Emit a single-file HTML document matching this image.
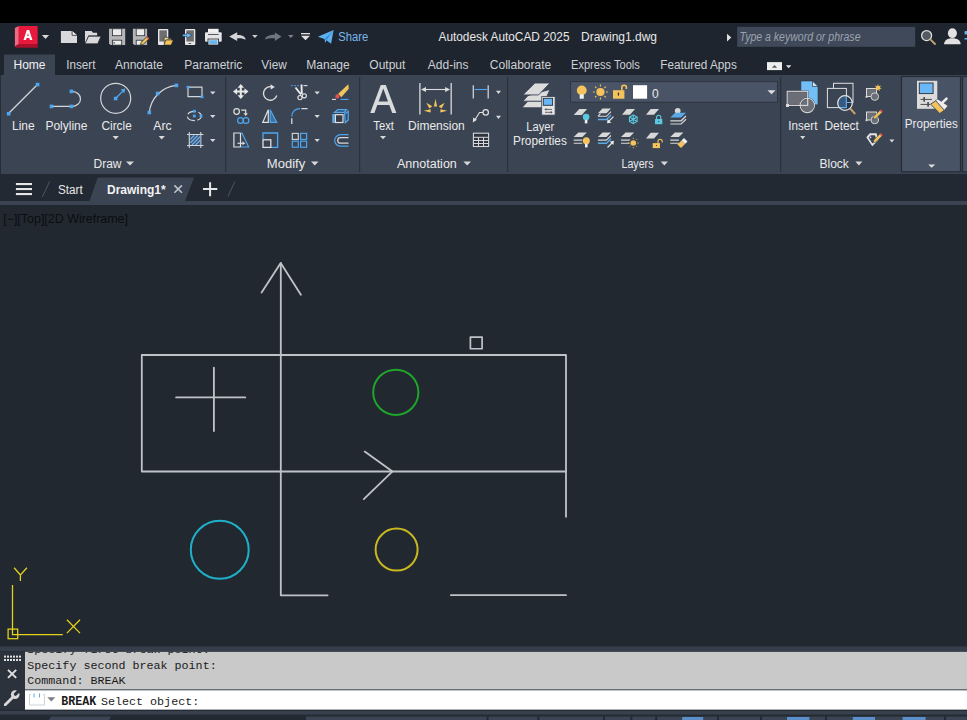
<!DOCTYPE html>
<html><head><meta charset="utf-8">
<style>
html,body{margin:0;padding:0;width:967px;height:720px;overflow:hidden;background:#212830;}
svg{display:block;position:absolute;left:0;top:0;}
text{font-family:"Liberation Sans",sans-serif;}
.m text,text.m{font-family:"Liberation Mono",monospace;}
</style></head><body>
<svg width="967" height="720" viewBox="0 0 967 720">
<!-- top black bar -->
<rect x="0" y="0" width="967" height="23" fill="#000"/>
<!-- title bar + tab row -->
<rect x="0" y="23" width="967" height="52" fill="#1f252e"/>
<!-- active Home tab -->
<rect x="4" y="54.5" width="51" height="21" fill="#3b4453"/>
<!-- ribbon -->
<rect x="0" y="75" width="967" height="99" fill="#3b4453"/>
<rect x="0" y="75" width="1" height="99" fill="#272d37"/>
<!-- file tab bar -->
<rect x="0" y="174" width="967" height="27" fill="#222933"/>
<rect x="0" y="201" width="967" height="4" fill="#3b4453"/>
<!-- canvas -->
<rect x="0" y="205" width="967" height="442" fill="#212830"/>
<!-- command line -->
<rect x="0" y="646.5" width="967" height="4.5" fill="#363e4b"/>
<rect x="0" y="651.5" width="967" height="68.5" fill="#2b323c"/>
<rect x="25" y="651.8" width="942" height="37.6" fill="#c9c9c9"/>
<rect x="25" y="690.3" width="942" height="19.5" fill="#ffffff"/>
<!-- status bar stub -->
<rect x="0" y="709.8" width="967" height="10.2" fill="#232a33"/>
<rect x="0" y="711" width="967" height="3.5" fill="#38404d"/>
<rect x="0" y="716.5" width="967" height="3.5" fill="#222933"/>
<polygon points="51,716.5 111,716.5 109,720 49,720" fill="#3b4453"/>
<rect x="306" y="716.5" width="661" height="3.5" fill="#3b4453"/>
<g fill="#222933">
<rect x="486.5" y="716.5" width="2" height="3.5"/><rect x="537.3" y="716.5" width="2" height="3.5"/><rect x="603" y="716.5" width="2" height="3.5"/><rect x="630.4" y="716.5" width="2" height="3.5"/><rect x="655.2" y="716.5" width="2" height="3.5"/><rect x="717" y="716.5" width="2" height="3.5"/><rect x="760" y="716.5" width="2" height="3.5"/><rect x="825" y="716.5" width="2" height="3.5"/><rect x="944" y="716.5" width="2" height="3.5"/>
</g>
<g fill="#5b8fc9">
<rect x="682.2" y="717" width="21" height="3"/><rect x="787" y="717" width="22.4" height="3"/><rect x="852.8" y="717" width="22.2" height="3"/><rect x="902.6" y="717" width="23" height="3"/>
</g>



<!-- ===== QAT ICONS ===== -->
<g id="qat">
<!-- logo -->
<polygon points="14.9,28 18.8,26 18.8,44 14.9,46.4" fill="#f26a82"/>
<polygon points="14.9,46.4 18.8,44 37.6,44 37.8,47.8 16,47.8" fill="#a8102c"/>
<rect x="18.8" y="26" width="18.8" height="18" fill="#e8193d"/>
<path d="M23.5,40 L26.8,29.9 L29.2,29.9 L32.4,40 L29.9,40 L29.3,38 L26.6,38 L26,40 Z M27.2,35.9 L28.7,35.9 L27.95,33 Z" fill="#fff"/>
<polygon points="41.9,35 49.1,35 45.5,39" fill="#d8d8d8"/>
<!-- new -->
<path d="M60.9,30.9 H72.1 L77,35.3 V43.1 H60.9 Z" fill="#d9d9db"/>
<path d="M72.1,30.9 L72.1,35.3 L77,35.3" fill="#f4f4f4" stroke="#1f252e" stroke-width="0.8"/>
<!-- open -->
<path d="M85,30.9 H91.5 L93,32.7 H97.1 V35.5 H88.4 L85,43.5 Z" fill="#d9d9db"/>
<path d="M88.6,36.2 H101 L97.7,43.8 H85 Z" fill="#d9d9db" stroke="#1f252e" stroke-width="0.7"/>
<!-- save -->
<path d="M109,28.8 H125.2 V45.1 H110.5 L109,43.6 Z" fill="#b5b5b7"/>
<rect x="112.4" y="28.8" width="9.3" height="6.9" fill="#ececec" stroke="#2a2f36" stroke-width="0.8"/>
<rect x="112.4" y="40.2" width="9.3" height="4.9" fill="#ececec" stroke="#2a2f36" stroke-width="0.8"/>
<rect x="113.6" y="42" width="1" height="1.7" fill="#333"/>
<!-- save as -->
<path d="M132.9,28.8 H147.1 V45.1 H134.4 L132.9,43.6 Z" fill="#b5b5b7"/>
<rect x="136.2" y="28.8" width="8.5" height="6.9" fill="#ececec" stroke="#2a2f36" stroke-width="0.8"/>
<rect x="136.2" y="40.2" width="6" height="4.9" fill="#ececec" stroke="#2a2f36" stroke-width="0.8"/>
<path d="M140.5,45.3 L141.2,42.3 L147.2,36.3 L149.3,38.4 L143.3,44.4 Z" fill="#f2c55c" stroke="#1f252e" stroke-width="0.8"/>
<path d="M146.1,37.4 L147.2,36.3 L149.3,38.4 L148.2,39.5 Z" fill="#e05050"/>
<!-- phone open -->
<rect x="158" y="29" width="10.3" height="16.1" rx="1" fill="#e6e6e6"/>
<rect x="159.4" y="30.3" width="7.5" height="11.2" fill="#6f6f70"/>
<path d="M164,37.2 H167.5 L168.5,38.6 H171.5 V40 H166 L164.5,45 Z" fill="#e8d08a" stroke="#1f252e" stroke-width="0.6"/>
<path d="M165.8,40 H173.2 L171.2,45.1 H164 Z" fill="#f4c45a" stroke="#1f252e" stroke-width="0.6"/>
<!-- phone save -->
<rect x="185" y="29" width="10.3" height="16.1" rx="1" fill="#e6e6e6"/>
<rect x="186.4" y="30.3" width="7.5" height="11.2" fill="#6f6f70"/>
<rect x="188.5" y="43" width="2.6" height="0.9" fill="#444"/>
<path d="M182.6,34.3 H187 V32.4 L191.8,35.4 L187,38.4 V36.5 H182.6 Z" fill="#69b9f5" stroke="#1f252e" stroke-width="0.5"/>
<!-- print -->
<rect x="208" y="28.8" width="10.6" height="5" fill="#f0f0f0"/>
<rect x="205" y="32.2" width="16.7" height="9.6" rx="1" fill="#e4e4e6"/>
<rect x="208" y="34" width="10.6" height="0.8" fill="#1f252e" opacity="0.9"/>
<rect x="208" y="39" width="10.6" height="6" fill="#eaeaea" stroke="#1f252e" stroke-width="0.8"/>
<rect x="209.2" y="40.2" width="8.2" height="3.8" fill="#6ab6f2"/>
<!-- undo -->
<path d="M229.2,36.5 L237.2,32.2 V34.9 C242,34.7 245.6,36.6 245.6,39.8 C244,38.4 241,38 237.2,38.2 V40.9 Z" fill="#d4d4d6"/>
<polygon points="252.1,35 257.7,35 254.9,38.1" fill="#cfcfcf"/>
<!-- redo -->
<path d="M281.5,36.4 L274.9,32.6 V34.8 C269.5,34.8 265,36.6 265,39.6 C267,38.4 270.5,38 274.9,38.2 V40.9 Z" fill="#6d7681"/>
<polygon points="288.1,35.1 293.5,35.1 290.8,38" fill="#7d8590"/>
<!-- customize -->
<rect x="301" y="33" width="9" height="1.3" fill="#e0e0e0"/>
<polygon points="301,35.8 310,35.8 305.5,40.2" fill="#e0e0e0"/>
<!-- share -->
<path d="M317.9,36.8 L333.6,30.1 L331.1,43.8 L326.4,40.2 L325.3,43 L324.5,38.9 Z" fill="#5db2f2"/>
<path d="M324.5,38.9 L333.6,30.1 L326.4,40.2 Z" fill="#3d8fd0"/>
<!-- minimize icon -->
<rect x="767" y="62.1" width="15" height="8" fill="#eeeeee"/>
<polygon points="772,67.8 777.1,67.8 774.55,64.9" fill="#555a60"/>
<polygon points="785.9,65.2 791.4,65.2 788.65,68.2" fill="#e0e0e0"/>
<!-- expander -->
<polygon points="727,33.8 731.3,37.6 727,41.4" fill="#e0e0e0"/>
<!-- search box -->
<rect x="737.2" y="26.8" width="178" height="20" fill="#3f4959"/>
<!-- search icon -->
<circle cx="926.6" cy="35.6" r="5" fill="#555b63" stroke="#dcdcdc" stroke-width="1.3"/>
<line x1="930.6" y1="39.6" x2="935" y2="44" stroke="#c4a675" stroke-width="1.8" stroke-linecap="round"/>
<!-- user -->
<ellipse cx="952.4" cy="33.2" rx="4.5" ry="4.9" fill="#e2e2e2"/>
<path d="M944,44.2 C944.3,40.4 947.5,38.3 952.4,38.3 C957.3,38.3 960.5,40.4 960.7,44.2 Z" fill="#e2e2e2"/>
<rect x="964.5" y="31" width="3" height="3.5" fill="#5db2f2" rx="1"/>
<rect x="964.5" y="38" width="3" height="1.5" fill="#5db2f2"/>
</g>

<!-- ===== RIBBON: DRAW ===== -->
<g id="draw">
<g fill="#d8d8d8">
<polygon points="112.6,136 118.8,136 115.7,139.5"/>
<polygon points="158.6,136 164.8,136 161.7,139.5"/>
<polygon points="210,91.5 215.5,91.5 212.75,94.5"/>
<polygon points="210,115 215.5,115 212.75,118"/>
<polygon points="210,139 215.5,139 212.75,142"/>
<polygon points="126,161.5 134,161.5 130,165.5"/>
</g>
<line x1="9" y1="113" x2="37" y2="85" stroke="#d4d6d8" stroke-width="1.2"/>
<path d="M51.5,106.4 H71.4 M71.4,91.4 C83.5,91.4 83.5,106.4 71.4,106.4" fill="none" stroke="#d4d6d8" stroke-width="1.2"/>
<circle cx="115.7" cy="98.3" r="15" fill="none" stroke="#d4d6d8" stroke-width="1.2"/>
<line x1="116" y1="98" x2="124" y2="90" stroke="#4ea6f0" stroke-width="1.2"/>
<polygon points="125.3,88.6 120.6,89.6 124.3,93.3" fill="#4ea6f0"/>
<path d="M149.3,112.5 C150.5,99 161,87 176.4,85.4" fill="none" stroke="#d4d6d8" stroke-width="1.2"/>
<path d="M188,87.2 H202 V96.6 H188 Z" fill="none" stroke="#d4d6d8" stroke-width="1.2"/>
<ellipse cx="194.3" cy="116" rx="7" ry="4.6" fill="none" stroke="#d4d6d8" stroke-width="1.1" stroke-dasharray="9 2.5" stroke-dashoffset="3"/>
<path d="M189.3,132 V148 M200.8,132 V148 M187,134.5 H203.5 M187,145.5 H203.5" stroke="#d4d6d8" stroke-width="1.1"/>
<rect x="190.3" y="135.3" width="9.9" height="9.6" fill="#3a5d86"/>
<path d="M190.4,139.3 L194.3,135.4 M190.4,142.8 L197.8,135.4 M192,144.8 L200.1,136.7 M195.6,144.8 L200.1,140.3" stroke="#7fb6e8" stroke-width="1.1"/>
<g fill="#4ea6f0">
<rect x="6.9" y="111.9" width="3.6" height="3.6"/>
<rect x="35.8" y="82.8" width="3.6" height="3.6"/>
<rect x="49.7" y="104.6" width="3.6" height="3.6"/>
<rect x="69.6" y="104.6" width="3.6" height="3.6"/>
<rect x="69.6" y="89.6" width="3.6" height="3.6"/>
<rect x="113.9" y="96.8" width="3.5" height="3.5"/>
<rect x="147.5" y="110.7" width="3.6" height="3.6"/>
<rect x="155.8" y="91.7" width="3.6" height="3.6"/>
<rect x="174.6" y="83.6" width="3.6" height="3.6"/>
<rect x="186.6" y="85.8" width="2.8" height="2.8"/>
<rect x="200.6" y="95.4" width="2.8" height="2.8"/>
<rect x="192.9" y="109.8" width="2.8" height="2.8"/>
<rect x="192.9" y="114.6" width="2.8" height="2.8"/>
<rect x="199.6" y="114.6" width="2.8" height="2.8"/>
</g>
<rect x="225" y="77" width="1.2" height="95" fill="#2b313b"/>
</g>
<!-- ===== RIBBON: MODIFY ===== -->
<g id="modify">
<g fill="#d8d8d8">
<polygon points="314.5,91.5 319.8,91.5 317.15,94.5"/>
<polygon points="314.5,115 319.8,115 317.15,118"/>
<polygon points="314.5,139 319.8,139 317.15,142"/>
<polygon points="311,161.5 318.5,161.5 314.75,165.5"/>
</g>
<!-- move -->
<path d="M240.8,84 L244,87.8 H241.8 V90.5 H244.5 V88.3 L248.5,91.5 L244.5,94.7 V92.5 H241.8 V95.2 H244 L240.8,99 L237.6,95.2 H239.8 V92.5 H237.1 V94.7 L233,91.5 L237.1,88.3 V90.5 H239.8 V87.8 H237.6 Z" fill="#e8e8e8"/>
<!-- rotate -->
<path d="M272.5,87 A6.8,6.8 0 1 0 276.8,95.5" fill="none" stroke="#e0e0e0" stroke-width="1.3"/>
<polygon points="270.5,84.2 274.8,87 270.8,89.6" fill="#e0e0e0"/>
<!-- copy -->
<circle cx="236.6" cy="111.5" r="2.8" fill="none" stroke="#e0e0e0" stroke-width="1.2"/>
<path d="M241.2,110.2 H245.7 V113.5" fill="none" stroke="#e0e0e0" stroke-width="1.2"/>
<polygon points="243.5,113.2 247.9,113.2 245.7,116" fill="#e0e0e0"/>
<circle cx="240.5" cy="120.5" r="2.9" fill="none" stroke="#4ea6f0" stroke-width="1.2"/>
<circle cx="246" cy="120.5" r="2.9" fill="none" stroke="#4ea6f0" stroke-width="1.2"/>
<!-- mirror -->
<path d="M262.8,122.3 L268.3,109.8 V122.3 Z" fill="none" stroke="#e0e0e0" stroke-width="1.2"/>
<path d="M270.2,109.8 L276.7,122.3 H270.2 Z" fill="#4ea6f0" fill-opacity="0.45" stroke="#4ea6f0" stroke-width="1.2"/>
<!-- stretch -->
<path d="M240.5,147 H233.9 V133 H240.5" fill="none" stroke="#e0e0e0" stroke-width="1.2"/>
<path d="M240.5,133 H242 L248.6,147 H240.5" fill="none" stroke="#4ea6f0" stroke-width="1.2"/>
<path d="M240.5,133 V147" stroke="#e0e0e0" stroke-width="1.2"/>
<path d="M237.5,143.3 H243" stroke="#e0e0e0" stroke-width="1.1"/>
<polygon points="242.5,141.3 245.2,143.3 242.5,145.3" fill="#e0e0e0"/>
<!-- scale -->
<path d="M263,139 V133 H277.6 V147.4 H271" fill="none" stroke="#4ea6f0" stroke-width="1.3"/>
<rect x="263" y="139.8" width="7.8" height="7.6" fill="none" stroke="#e0e0e0" stroke-width="1.3"/>
<!-- trim -->
<path d="M291,85.6 H300" stroke="#4a85c0" stroke-width="1.1" stroke-dasharray="2 1"/>
<path d="M303.5,85.6 H307.5" stroke="#e0e0e0" stroke-width="1.1"/>
<path d="M295.5,87.5 L301,94.5 M301.5,84.5 L301.8,94" stroke="#ececec" stroke-width="1.9"/>
<circle cx="300" cy="97.6" r="2.1" fill="none" stroke="#e8e8e8" stroke-width="1.1"/>
<circle cx="304.3" cy="95.8" r="2.1" fill="none" stroke="#e8e8e8" stroke-width="1.1"/>
<!-- erase -->
<path d="M338.2,93.8 L348.3,84.2 L348.8,88.8 L341.3,97.2 Z" fill="#f2c55c"/>
<circle cx="337.4" cy="96.4" r="2.1" fill="#e35050"/>
<path d="M332,99.4 H336" stroke="#e0e0e0" stroke-width="1.1"/>
<path d="M340.5,99.4 H348.5" stroke="#4ea6f0" stroke-width="1.1"/>
<!-- fillet -->
<path d="M291.8,116.5 C291.8,112 295,108.6 300,108.6" fill="none" stroke="#4ea6f0" stroke-width="1.3"/>
<path d="M301.3,108.6 H307.6 M291.8,118.2 V124" stroke="#d8d8d8" stroke-width="1.3"/>
<!-- explode cube -->
<path d="M334.5,112.4 L337.8,109.6 H346.5 L344.2,112.4 Z" fill="#24507e" stroke="#5aa9e6" stroke-width="1.2"/>
<path d="M344.6,114 L348.2,111.2 V120 L345.3,122.8 Z" fill="#24507e" stroke="#5aa9e6" stroke-width="1.2"/>
<rect x="332.2" y="114" width="2.6" height="9" fill="#5aa9e6"/>
<rect x="335.4" y="114.7" width="7.6" height="7.8" fill="#363d48" stroke="#e0e0e0" stroke-width="1.2"/>
<!-- array -->
<rect x="292.3" y="133.4" width="6" height="6" fill="none" stroke="#cfcfcf" stroke-width="1.2"/>
<rect x="300.6" y="133.4" width="6" height="6" fill="none" stroke="#4ea6f0" stroke-width="1.2"/>
<rect x="292.3" y="141.2" width="6" height="6" fill="none" stroke="#4ea6f0" stroke-width="1.2"/>
<rect x="300.6" y="141.2" width="6" height="6" fill="none" stroke="#4ea6f0" stroke-width="1.2"/>
<!-- offset -->
<path d="M348.5,134.6 H340.5 A5.8,5.8 0 0 0 340.5,146.2 H348.5" fill="none" stroke="#4ea6f0" stroke-width="1.2"/>
<path d="M348.5,137.6 H340.5 A2.8,2.8 0 0 0 340.5,143.2 H348.5" fill="none" stroke="#d8d8d8" stroke-width="1.2"/>
<rect x="359" y="77" width="1.2" height="95" fill="#2b313b"/>
</g>

<!-- ===== RIBBON: ANNOTATION ===== -->
<g id="annot">
<g fill="#d8d8d8">
<polygon points="380,136 386,136 383,139.3"/>
<polygon points="496,90.8 501,90.8 498.5,94"/>
<polygon points="496,115.8 501,115.8 498.5,119"/>
<polygon points="463.4,161.5 471,161.5 467.2,165.5"/>
</g>
<!-- big A -->
<path d="M370.2,113 L380.8,85 H385.8 L396.4,113 H392.2 L389.3,105 H377.3 L374.4,113 Z M378.6,101.4 H388 L383.3,88.6 Z" fill="#d9dadc"/>
<!-- dimension -->
<path d="M419.9,83.1 V114.5 M451.2,83.1 V114.5" stroke="#cfd0d2" stroke-width="1.4"/>
<path d="M423,89.5 H448" stroke="#dcdcdc" stroke-width="1.1"/>
<polygon points="421,89.5 426,87 426,92" fill="#dcdcdc"/>
<polygon points="450.1,89.5 445.1,87 445.1,92" fill="#dcdcdc"/>
<g fill="#f2c55c">
<polygon points="433.9,106.6 435.5,98.8 437.1,106.6"/>
<polygon points="429.4,108.6 426.3,102.8 432.3,106.3"/>
<polygon points="441.6,108.6 444.7,102.8 438.7,106.3"/>
<polygon points="430.6,109.2 423.8,110.8 430.6,112.4"/>
<polygon points="440.4,109.2 447.2,110.8 440.4,112.4"/>
</g>
<!-- linear dim -->
<path d="M473.3,85.2 V98.6 M488.2,85.2 V98.6" stroke="#cfd0d2" stroke-width="1.3"/>
<path d="M474.5,89.5 H487" stroke="#4ea6f0" stroke-width="1.1"/>
<!-- leader -->
<circle cx="485.7" cy="112.4" r="2.7" fill="none" stroke="#e0e0e0" stroke-width="1.2"/>
<path d="M483,112.5 H479.5 L474.5,120.5" fill="none" stroke="#e0e0e0" stroke-width="1.1"/>
<polygon points="472.8,122.5 473.2,117.6 477,119.8" fill="#e0e0e0"/>
<!-- table -->
<rect x="473.4" y="133.2" width="15.2" height="13.3" fill="#2f3540" stroke="#d8d8d8" stroke-width="1.1"/>
<path d="M473.4,137.3 H488.6 M473.4,140.5 H488.6 M473.4,143.5 H488.6 M478.5,137.3 V146.5 M483.5,137.3 V146.5" stroke="#d8d8d8" stroke-width="1"/>
<rect x="507" y="77" width="1.2" height="95" fill="#2b313b"/>
</g>
<!-- ===== RIBBON: LAYERS ===== -->
<g id="layers">
<polygon points="660.7,161.5 668,161.5 664.35,165.5" fill="#d8d8d8"/>
<!-- layer properties big -->
<polygon points="522.8,107.2 528,101.6 550,101.6 544.8,107.2" fill="#dcdcdc"/>
<polygon points="522.8,101.2 528,95.6 550,89.4 544.8,101.2" fill="#dcdcdc" stroke="#3b4453" stroke-width="0.9"/>
<polygon points="522.8,94.9 534.9,83 550,83 538.6,94.9" fill="#dcdcdc" stroke="#3b4453" stroke-width="0.9"/>
<rect x="541.7" y="96.6" width="13.4" height="18.5" fill="#e6e6e6" stroke="#3b4453" stroke-width="0.8"/>
<rect x="543.3" y="98.3" width="9.3" height="7" fill="#68b6f6" stroke="#2a2f36" stroke-width="0.9"/>
<path d="M545,109.4 H552 M545,112.3 H552" stroke="#555" stroke-width="0.9"/>
<polygon points="544.4,109.4 546.4,108 546.4,110.8" fill="#555"/>
<polygon points="552.7,112.3 550.7,110.9 550.7,113.7" fill="#555"/>
<!-- combobox -->
<rect x="570.6" y="81.6" width="207" height="20.6" fill="#4a5467" stroke="#2e3541" stroke-width="1"/>
<polygon points="767.5,90.3 775.5,90.3 771.5,94.3" fill="#e0e0e0"/>
<circle cx="581.75" cy="90.4" r="4.9" fill="#f5c35c"/>
<rect x="579.7" y="94.4" width="4.1" height="4.3" fill="#f0f0f0"/>
<circle cx="600.4" cy="92" r="4.1" fill="#f5c35c"/>
<path d="M600.4,84.5 V86.4 M600.4,97.6 V99.5 M592.9,92 H594.8 M606,92 H607.9 M595.1,86.7 L596.4,88 M604.4,96 L605.7,97.3 M605.7,86.7 L604.4,88 M596.4,96 L595.1,97.3" stroke="#f5c35c" stroke-width="1.1"/>
<path d="M621.8,90.3 V87.5 A2.3,2.3 0 0 1 626.4,87.5 V89" fill="none" stroke="#f5c35c" stroke-width="1.6"/>
<rect x="613" y="90.2" width="11.4" height="8.5" fill="#f5c35c"/>
<rect x="617.8" y="92.6" width="1.3" height="3" fill="#333"/>
<rect x="633" y="85.2" width="14.1" height="13.5" fill="#ffffff"/>
<!-- small layer icons -->
<g fill="#d8d8d8">
<polygon points="573.7,114.9 579.3,109 587.1,109 581.8,114.9"/>
<polygon points="622,114.7 626.7,109 635,109 630,114.7"/>
<polygon points="646,114.7 650.7,109 659,109 654,114.7"/>
<polygon points="646,138.5 650.7,132.8 659,132.8 654,138.5"/>
</g>
<circle cx="586.1" cy="117" r="3.3" fill="#5cc8e0"/>
<rect x="584.8" y="119.8" width="2.6" height="3.6" fill="#f0f0f0"/>
<g stroke="#5cc8e0" stroke-width="1.1" fill="none">
<polygon points="633.3,114.9 637.1,117.1 637.1,121.5 633.3,123.7 629.5,121.5 629.5,117.1"/>
<path d="M633.3,114.9 V123.7 M629.5,117.1 L637.1,121.5 M629.5,121.5 L637.1,117.1"/>
</g>
<path d="M656.6,119 V117.4 A2.1,2.1 0 0 1 660.8,117.4 V119" fill="none" stroke="#5cc8e0" stroke-width="1.1"/>
<rect x="655" y="119" width="7.3" height="5.2" fill="#5cc8e0"/>
<rect x="658.2" y="121" width="0.9" height="1" fill="#333"/>
<!-- stacks -->
<g id="stk">
<polygon points="597.9,113.2 602.5,108.6 611,108.6 606.5,113.2" fill="#d8d8d8"/>
<path d="M597.9,116.3 L600.5,113.6 M597.9,116.3 H606.5 L611,111.7" fill="none" stroke="#d8d8d8" stroke-width="1.1"/>
<path d="M597.9,119.5 H606.5 L611,114.9" fill="none" stroke="#5aa9e6" stroke-width="1.4"/>
</g>
<path d="M613.5,116.6 L608.5,121.6" stroke="#e8e8e8" stroke-width="1.2"/>
<polygon points="607,123.3 607.6,119 611.3,122.7" fill="#e8e8e8"/>
<!-- stack row2 2 -->
<polygon points="597.9,137 602.5,132.4 611,132.4 606.5,137" fill="#d8d8d8"/>
<path d="M597.9,140.1 H606.5 L611,135.5" fill="none" stroke="#d8d8d8" stroke-width="1.1"/>
<path d="M597.9,143.3 H606.5 L611,138.7" fill="none" stroke="#5aa9e6" stroke-width="1.4"/>
<path d="M607.5,147.5 L612.5,142.5" stroke="#e8e8e8" stroke-width="1.2"/>
<polygon points="614,140.8 613.4,145.1 609.7,141.4" fill="#e8e8e8"/>
<!-- stack + bulb -->
<polygon points="573.7,137 578.3,132.4 586.8,132.4 582.3,137" fill="#d8d8d8"/>
<path d="M573.7,140.1 H582.3 M573.7,143.3 H582.3" stroke="#d8d8d8" stroke-width="1.1"/>
<circle cx="586.3" cy="140.8" r="3.5" fill="#f5c35c"/>
<rect x="585" y="143.8" width="2.6" height="3.6" fill="#f0f0f0"/>
<!-- stack + sun -->
<polygon points="621,137 625.6,132.4 634.1,132.4 629.6,137" fill="#d8d8d8"/>
<path d="M621,140.1 H629.6 M621,143.3 H629.6" stroke="#d8d8d8" stroke-width="1.1"/>
<circle cx="633.3" cy="143" r="2.8" fill="#f5c35c"/>
<path d="M633.3,137.8 V138.8 M633.3,147.2 V148.2 M628.1,143 H629.1 M637.5,143 H638.5 M629.6,139.3 L630.3,140 M636.3,146 L637,146.7 M637,139.3 L636.3,140 M630.3,146 L629.6,146.7" stroke="#f5c35c" stroke-width="1"/>
<!-- unlocked -->
<path d="M658,143.3 V141.3 A2.1,2.1 0 0 1 662.2,141.3 V142.5" fill="none" stroke="#f5c35c" stroke-width="1.1"/>
<rect x="652.7" y="143.1" width="7.3" height="5" fill="#f5c35c"/>
<rect x="656" y="145" width="0.9" height="1" fill="#333"/>
<!-- stack blue top + circle -->
<circle cx="677.7" cy="110.8" r="2.9" fill="#d8d8d8"/>
<polygon points="670.3,117.6 675.2,112.8 686,112.8 681.1,117.6" fill="#5aa9e6"/>
<path d="M670.3,120.8 H681.1 L686,116 M670.3,124 H681.1 L686,119.2" fill="none" stroke="#d8d8d8" stroke-width="1.2"/>
<!-- stack + brush -->
<polygon points="670.3,137 674.9,132.4 683.4,132.4 678.9,137" fill="#d8d8d8"/>
<path d="M670.3,140.1 H678.9 M670.3,143.3 H678.9" stroke="#d8d8d8" stroke-width="1.1"/>
<path d="M677.5,144.5 L681.5,140.5 L685,144 L681,148 Z" fill="#f5c35c"/>
<path d="M681.5,140.5 L684,138 L687.5,141.5 L685,144 Z" fill="#eeeeee"/>
<rect x="780" y="77" width="1.2" height="95" fill="#2b313b"/>
</g>
<!-- ===== RIBBON: BLOCK ===== -->
<g id="block">
<g fill="#d8d8d8">
<polygon points="800.2,136 805.2,136 802.7,139.2"/>
<polygon points="889.4,139.6 894.3,139.6 891.85,142.6"/>
<polygon points="855.4,161.5 862.4,161.5 858.9,165.5"/>
</g>
<!-- insert -->
<path d="M800.9,81 H812.5 L818,86.5 V104.8 H800.9 Z" fill="#74bef7" stroke="#2e3541" stroke-width="0.6"/>
<path d="M812.5,81 V86.5 H818 Z" fill="#cfe8fc" stroke="#2e3541" stroke-width="0.7"/>
<rect x="787.2" y="91.3" width="20.5" height="14.1" fill="#6b6e76" stroke="#2e3541" stroke-width="1.6"/>
<circle cx="807.3" cy="105.4" r="7.2" fill="#6b6e76" stroke="#2e3541" stroke-width="1.6"/>
<circle cx="807.3" cy="105.4" r="7.2" fill="none" stroke="#d4d4d4" stroke-width="1.1"/>
<rect x="787.2" y="91.3" width="20.5" height="14.1" fill="none" stroke="#dcdcdc" stroke-width="1.1"/>
<rect x="786" y="104" width="3" height="3" fill="#dcdcdc"/>
<!-- detect -->
<rect x="833.5" y="83.3" width="19.5" height="19" fill="none" stroke="#e0e0e0" stroke-width="1"/>
<rect x="827.4" y="88.4" width="19" height="19.2" fill="#3b4453" stroke="#e0e0e0" stroke-width="1"/>
<line x1="850" y1="108.4" x2="855.2" y2="114" stroke="#c9a46a" stroke-width="2"/>
<clipPath id="magc"><circle cx="845" cy="103" r="7"/></clipPath>
<circle cx="845" cy="103" r="7.3" fill="#2c3542"/>
<g clip-path="url(#magc)">
<rect x="836" y="94" width="10.4" height="13.6" fill="#35597f"/>
<path d="M846.3,94 V107.6 H836 M846.3,102.5 H853" fill="none" stroke="#6ab0ee" stroke-width="1.1"/>
</g>
<circle cx="845" cy="103" r="7.3" fill="none" stroke="#e2e2e2" stroke-width="1.3"/>
<!-- small block icons -->
<rect x="866.5" y="88.5" width="10" height="8" fill="#6b6f77" stroke="#dcdcdc" stroke-width="1"/>
<circle cx="874.8" cy="96.6" r="3.8" fill="#6b6f77" stroke="#cfcfcf" stroke-width="1"/>
<rect x="865.6" y="96" width="1.8" height="1.8" fill="#dcdcdc"/>
<path d="M878,84 L878.8,86.2 L881,85.4 L879.8,87.5 L881.8,88.6 L879.4,88.9 L879.8,91.2 L878,89.6 L876.2,91.2 L876.6,88.9 L874.2,88.6 L876.2,87.5 L875,85.4 L877.2,86.2 Z" fill="#f5c35c"/>
<rect x="866.5" y="112" width="10" height="8" fill="#6b6f77" stroke="#dcdcdc" stroke-width="1"/>
<circle cx="874.8" cy="120" r="3.8" fill="#6b6f77" stroke="#cfcfcf" stroke-width="1"/>
<rect x="865.6" y="119.4" width="1.8" height="1.8" fill="#dcdcdc"/>
<path d="M873.8,116.5 L880.2,110.1 L882.3,112.2 L875.9,118.6 L873.2,119.2 Z" fill="#f5c35c" stroke="#3b4453" stroke-width="0.6"/>
<path d="M879.6,110.7 L880.8,109.5 L882.9,111.6 L881.7,112.8 Z" fill="#e35050"/>
<path d="M866.3,137.3 L869.8,133.2 H876.5 L878.5,140 L872.3,146.3 Z" fill="#e6e6e6"/><path d="M868.6,137.6 L870.8,135.2 H875 L876.3,139.6 L872.3,143.6 Z" fill="#3b4453"/><circle cx="870.5" cy="137.4" r="0.8" fill="#e6e6e6"/>
<path d="M873.8,140 L880.2,133.6 L882.3,135.7 L875.9,142.1 L873.2,142.7 Z" fill="#f5c35c" stroke="#3b4453" stroke-width="0.6"/>
<path d="M879.6,134.2 L880.8,133 L882.9,135.1 L881.7,136.3 Z" fill="#e35050"/>
</g>
<!-- ===== PROPERTIES PANEL ===== -->
<g id="props">
<rect x="901.5" y="76.5" width="59" height="95.3" fill="#485366" stroke="#262c36" stroke-width="1.2"/>
<rect x="962.5" y="76.5" width="6" height="95.3" fill="#485366" stroke="#262c36" stroke-width="1.2"/>
<polygon points="928.2,164.4 935.2,164.4 931.7,167.8" fill="#e0e0e0"/>
<rect x="917" y="80.8" width="20.3" height="28" fill="#dcdcdc"/>
<rect x="919.3" y="83" width="13.8" height="10.6" fill="#6cb8f6" stroke="#2a2f36" stroke-width="0.9"/>
<path d="M920.5,99.4 H932 M920.5,104.4 H930" stroke="#4a4a4a" stroke-width="1"/>
<path d="M924.2,97 V101.8 M928.1,102 V106.8" stroke="#4a4a4a" stroke-width="1.6"/>
<path d="M930.6,104.1 L935.9,100.8 L944.4,110.2 L939.8,113.6 Z" fill="#f5c35c" stroke="#3a4250" stroke-width="0.9"/>
<path d="M935.9,100.8 L937.6,98.9 L948,105.8 L944.4,110.2 Z" fill="#eeeeee" stroke="#3a4250" stroke-width="0.6"/>
<path d="M941.5,103.5 L946.5,98.6" stroke="#eeeeee" stroke-width="2.6" stroke-linecap="round"/>
</g>

<!-- ===== FILE TABS ===== -->
<g id="ftabs">
<rect x="15.9" y="183" width="16.1" height="2.1" fill="#e6e6e6"/>
<rect x="15.9" y="188" width="16.1" height="2.1" fill="#e6e6e6"/>
<rect x="15.9" y="193" width="16.1" height="2.1" fill="#e6e6e6"/>
<line x1="42.3" y1="197" x2="49.8" y2="181.2" stroke="#4d5562" stroke-width="1"/>
<polygon points="97.7,177.4 194,177.4 184.9,201.5 89.3,201.5" fill="#3b4453"/>
<path d="M174.4,185.4 L181.9,192.7 M181.9,185.4 L174.4,192.7" stroke="#c2c6cc" stroke-width="1.5"/>
<path d="M203,189.1 H217.3 M210.1,182.2 V196.3" stroke="#e8e8e8" stroke-width="2"/>
<line x1="227.9" y1="196.5" x2="234.9" y2="181.5" stroke="#4d5562" stroke-width="1"/>
</g>
<!-- ===== DRAWING ===== -->
<g id="dwg" fill="none" stroke="#bfc3c9" stroke-width="1.8" stroke-linecap="round" stroke-linejoin="round">
<path d="M141.8,355 H566 V516.8"/>
<path d="M141.8,355 V471.5 H566"/>
<path d="M280.8,263.1 V595.3 H327.6"/>
<path d="M261.6,292.5 L280.7,263.1 L300.9,294.7"/>
<path d="M364.7,451.6 L392.5,471.4 L363.8,499.1"/>
<path d="M176.1,397.4 H245.3 M213.9,367.6 V431.1"/>
<path d="M450.9,595.2 H566"/>
<rect x="470.4" y="337.1" width="11.7" height="11.65" stroke-width="1.7"/>
<circle cx="395.8" cy="392.3" r="22.6" stroke="#1fa52a" stroke-width="2"/>
<circle cx="219.75" cy="549.75" r="28.95" stroke="#1fb0c8" stroke-width="2"/>
<circle cx="396.6" cy="549.6" r="21" stroke="#c9b81f" stroke-width="2"/>
</g>
<!-- UCS -->
<g fill="none" stroke="#e8d21c" stroke-width="1.25">
<path d="M12.5,585 V634.6 H62.75"/>
<rect x="8.1" y="629.1" width="9.6" height="9.6"/>
<path d="M14.1,567.75 L20.4,575 L26.9,567.75 M20.4,575 V581"/>
<path d="M66.9,619.75 L80,633.1 M80,619.75 L66.9,633.1"/>
</g>
<!-- ===== COMMAND LINE ICONS ===== -->
<g id="cmd">
<g fill="#e0e0e0">
<rect x="4" y="655.6" width="2" height="2"/><rect x="7" y="655.6" width="2" height="2"/><rect x="10" y="655.6" width="2" height="2"/><rect x="13" y="655.6" width="2" height="2"/><rect x="16" y="655.6" width="2" height="2"/><rect x="19" y="655.6" width="2" height="2"/>
<rect x="4" y="659" width="2" height="2"/><rect x="7" y="659" width="2" height="2"/><rect x="10" y="659" width="2" height="2"/><rect x="13" y="659" width="2" height="2"/><rect x="16" y="659" width="2" height="2"/><rect x="19" y="659" width="2" height="2"/>
</g>
<path d="M8,669.9 L16.2,677.9 M16.2,669.9 L8,677.9" stroke="#e0e0e0" stroke-width="2"/>
<mask id="wm"><rect x="0" y="685" width="25" height="25" fill="#fff"/><path d="M15.5,694.2 L20,689.7" stroke="#000" stroke-width="3.2" stroke-linecap="round"/></mask>
<g mask="url(#wm)" fill="#d8d8d8">
<path d="M5,705 L12.8,697.2" stroke="#d8d8d8" stroke-width="2.8" stroke-linecap="round"/>
<circle cx="15.2" cy="694.6" r="4.3"/>
</g>
<path d="M29.5,694.5 V705 H44.5 V694.5 M29.5,694.5 H31 M43,694.5 H44.5" fill="none" stroke="#c8ccd0" stroke-width="0.9"/>
<path d="M34,693.5 V697.5 M39.5,693.5 V697.5" stroke="#5aa9e6" stroke-width="1"/>
<polygon points="47.3,697.3 55.3,697.3 51.3,701.5" fill="#7a7f86"/>
</g>
<!-- ===== TEXT ===== -->
<g font-size="12" fill="#e6e6e6">
<text x="438.5" y="40.5" fill="#e8e8e8" textLength="131" lengthAdjust="spacingAndGlyphs">Autodesk AutoCAD 2025</text>
<text x="581" y="40.5" fill="#e8e8e8">Drawing1.dwg</text>
<text x="338.3" y="40.5" fill="#78b8ee" textLength="30" lengthAdjust="spacingAndGlyphs">Share</text>
<text x="739.5" y="41" fill="#9aa2ad" font-style="italic" textLength="121" lengthAdjust="spacingAndGlyphs">Type a keyword or phrase</text>
<text x="13.5" y="69" fill="#f2f2f2">Home</text>
<g fill="#cdd1d6">
<text x="66.2" y="69" textLength="29.2" lengthAdjust="spacingAndGlyphs">Insert</text>
<text x="115" y="69">Annotate</text>
<text x="184.3" y="69">Parametric</text>
<text x="261.3" y="69" textLength="25.5" lengthAdjust="spacingAndGlyphs">View</text>
<text x="306.3" y="69">Manage</text>
<text x="369.3" y="69">Output</text>
<text x="427.8" y="69">Add-ins</text>
<text x="489.8" y="69">Collaborate</text>
<text x="571" y="69" textLength="68.8" lengthAdjust="spacingAndGlyphs">Express Tools</text>
<text x="660.3" y="69" textLength="76.5" lengthAdjust="spacingAndGlyphs">Featured Apps</text>
</g>
<g fill="#eaeaea">
<text x="12" y="130.3">Line</text>
<text x="45.4" y="130.3">Polyline</text>
<text x="101.5" y="130.3" textLength="30.2" lengthAdjust="spacingAndGlyphs">Circle</text>
<text x="153.3" y="130.3" textLength="18.3" lengthAdjust="spacingAndGlyphs">Arc</text>
<text x="373.3" y="130" textLength="20.6" lengthAdjust="spacingAndGlyphs">Text</text>
<text x="408.1" y="130">Dimension</text>
<text x="526.3" y="130.5" textLength="28" lengthAdjust="spacingAndGlyphs">Layer</text>
<text x="513.1" y="144.5" textLength="53.7" lengthAdjust="spacingAndGlyphs">Properties</text>
<text x="788.3" y="129.6" textLength="29.2" lengthAdjust="spacingAndGlyphs">Insert</text>
<text x="824.4" y="129.6" textLength="34.5" lengthAdjust="spacingAndGlyphs">Detect</text>
<text x="904.8" y="128" textLength="53" lengthAdjust="spacingAndGlyphs">Properties</text>
<text x="652" y="97.5">0</text>
<text x="93.5" y="168">Draw</text>
<text x="266.8" y="168" textLength="38.4" lengthAdjust="spacingAndGlyphs">Modify</text>
<text x="397" y="168" textLength="59.8" lengthAdjust="spacingAndGlyphs">Annotation</text>
<text x="621.5" y="168" textLength="32" lengthAdjust="spacingAndGlyphs">Layers</text>
<text x="819.5" y="168">Block</text>
</g>
<text x="58" y="193.5" fill="#e8e8e8" textLength="24.7" lengthAdjust="spacingAndGlyphs">Start</text>
<text x="107" y="193.5" fill="#f2f2f2" font-weight="bold">Drawing1*</text>
<text x="3.2" y="222.5" fill="#0a0d11" font-size="12" textLength="124.8" lengthAdjust="spacingAndGlyphs">[−][Top][2D Wireframe]</text>
</g>
<defs><clipPath id="cmdclip"><rect x="25" y="651.8" width="942" height="37.6"/></clipPath></defs>
<g class="m" font-size="11.7" fill="#1a1a1a"><g clip-path="url(#cmdclip)">
<text x="27.3" y="653.3">Specify first break point:</text>
<text x="27.3" y="669">Specify second break point:</text>
<text x="27.3" y="684">Command: BREAK</text></g>
<text x="61.3" y="704.6" font-weight="bold" font-size="12" textLength="35" lengthAdjust="spacingAndGlyphs">BREAK</text>
<text x="101" y="704.6">Select object:</text>
</g>
</svg>
</body></html>
